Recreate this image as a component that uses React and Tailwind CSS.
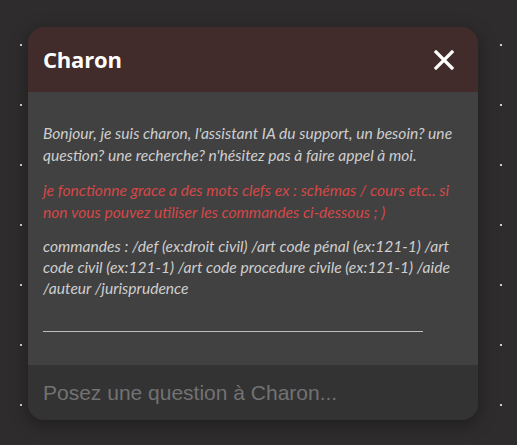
import { useState } from 'react';

const CloseIcon = () => (
  <svg width="20" height="20" viewBox="0 0 20 20" fill="none">
    <path d="M2 2 L18 18 M18 2 L2 18" stroke="#ffffff" strokeWidth="3.2" strokeLinecap="square" />
  </svg>
);

const App = () => {
  const [question, setQuestion] = useState('');

  return (
    <div className="w-[517px] h-[445px] overflow-hidden bg-[#2e2c2c] bg-[radial-gradient(circle,#cfcfcf_1px,transparent_1.5px)] bg-[size:60px_60px] bg-[position:-9px_15px] pt-[27px] pl-[28px]">
      <div className="w-[450px] rounded-2xl overflow-hidden shadow-[0_4px_18px_rgba(0,0,0,0.35)]">
        <div className="h-[65px] bg-[#412b2b] flex items-center justify-between pl-[15px] pr-[24px]">
          <h2 className="text-[22px] font-bold text-white font-['Open_Sans',sans-serif] tracking-[-0.2px]">Charon</h2>
          <button className="flex items-center justify-center">
            <CloseIcon />
          </button>
        </div>

        <div className="bg-[#414141] h-[273px] px-[15px] pt-[30px] italic text-[15.6px] leading-[22px] font-['Lato',sans-serif]">
          <p className="text-[#cecece]">
            Bonjour, je suis charon, l'assistant IA du support, un besoin? une question? une recherche? n'hésitez pas à faire appel à moi.
          </p>
          <p className="text-[#d44848] mt-[13px]">
            je fonctionne grace a des mots clefs ex : schémas / cours etc.. si non vous pouvez utiliser les commandes ci-dessous ; )
          </p>
          <p className="text-[#cecece] mt-[13px] leading-[21px]">
            commandes : /def (ex:droit civil) /art code pénal (ex:121-1) /art code civil (ex:121-1) /art code procedure civile (ex:121-1) /aide /auteur /jurisprudence
          </p>
          <div className="mt-[32px] w-[380px] h-px bg-[#bdbdbd]" />
        </div>

        <div className="bg-[#333333] h-[55px] flex items-center px-[15px]">
          <input
            value={question}
            onChange={e => setQuestion(e.target.value)}
            placeholder="Posez une question à Charon..."
            className="w-full bg-transparent outline-none text-[21px] text-[#dddddd] placeholder:text-[#727272] font-['Liberation_Sans',Arial,sans-serif]"
          />
        </div>
      </div>
    </div>
  );
};

export default App;
